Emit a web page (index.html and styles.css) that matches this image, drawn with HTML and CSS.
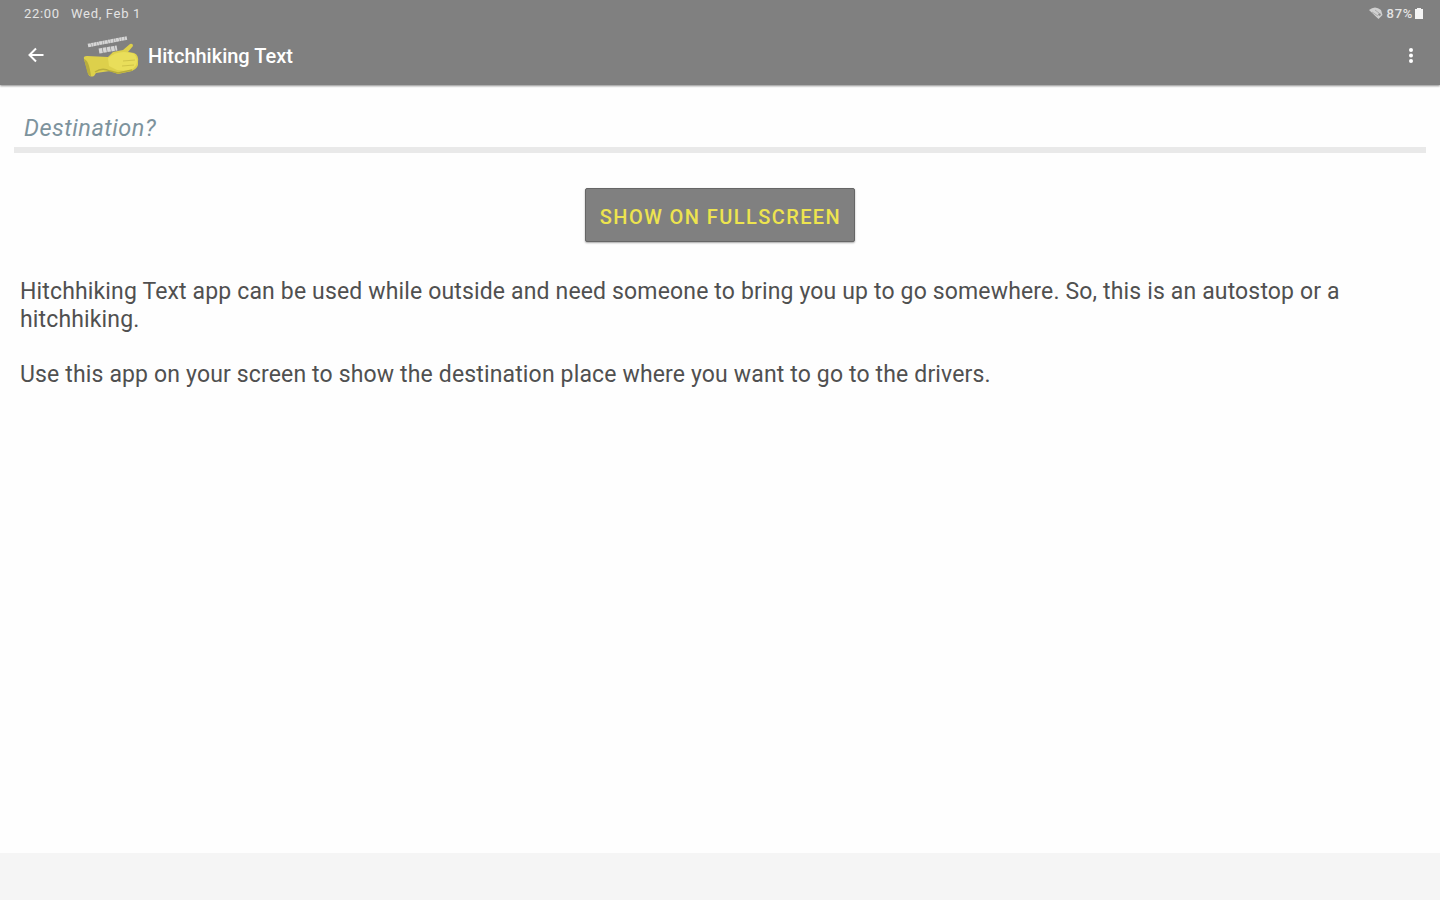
FILE: index.html
```html
<!DOCTYPE html>
<html lang="en">
<head>
    <meta charset="UTF-8">
    <meta name="viewport" content="width=device-width, initial-scale=1.0">
    <title>Hitchhiking Text</title>
    <link rel="stylesheet" href="styles.css">
</head>
<body>
    <header class="app-header">
        <div class="status-bar">
            <span class="clock">22:00</span>
            <span class="date">Wed, Feb 1</span>
            <div class="status-icons">
                <svg class="wifi-icon" width="16" height="14" viewBox="0 0 16 14">
                    <path d="M1 4Q7-1 13 4L14.500 9 10.500 13Z" fill="#d0d0d0"/>
                    <path d="M4 6l6 4M7 4l4 3" stroke="#aaa" stroke-width="1"/>
                    <circle cx="11.500" cy="8.500" r="1.200" fill="#888"/>
                </svg>
                <span class="battery-level">87%</span>
                <svg class="battery-icon" width="8" height="12" viewBox="0 0 8 12">
                    <path d="M2 1h4v1h2v10H0V2h2z" fill="#f4f4f4"/>
                </svg>
            </div>
        </div>
        <div class="toolbar">
            <svg class="back-icon" width="16" height="16" viewBox="0 0 16 16">
                <path d="M15.5 8H2M8 1.5L1.5 8 8 14.5" fill="none" stroke="#fff" stroke-width="2"/>
            </svg>
            <svg class="logo" width="58" height="44" viewBox="0 0 58 44">
                <!-- small cardboard sign -->
                <g fill="none" stroke="#d6d6d6">
                    <path d="M6 10.500L45 3" stroke-width="3.600" stroke-dasharray="3 .4 2 .3"/>
                    <path d="M17 16L35 13" stroke-width="5" stroke-dasharray="3.500 .6"/>
                </g>
                <!-- hand with the thumb up -->
                <path d="M2 24Q1 21 5 21L26 22 31 17 41 15 48 9Q51 8 51 11L46 17 52 18Q57 20 56 27 57 33 50 36L36 39 28 36 14 38 12 41Q7 43 6 38Z" fill="#ddd04b"/>
                <path d="M26 23Q33 17 42 17L50 18Q55 20 55 27 54 34 45 36L35 35 27 31Z" fill="#e9de5a"/>
                <path d="M2 24Q7 25 9 41 6 41 5 36Z" fill="#b8ad3e"/>
                <path d="M13 37Q20 32 28 36L36 38 50 35" fill="none" stroke="#b8ad3c" stroke-width="1.300"/>
                <path d="M41 26l12-1M40 31l12-1" fill="none" stroke="#d0c448"/>
            </svg>
            <h1 class="title">Hitchhiking Text</h1>
            <svg class="menu-icon" width="6" height="18" viewBox="0 0 6 18">
                <g fill="#fff">
                    <circle cx="3" cy="3" r="2"/>
                    <circle cx="3" cy="8.500" r="2"/>
                    <circle cx="3" cy="14" r="2"/>
                </g>
            </svg>
        </div>
    </header>

    <main class="content">
        <div class="destination">Destination?</div>
        <button class="fullscreen-button">SHOW ON FULLSCREEN</button>
        <div class="description">
            <p class="intro">Hitchhiking Text app can be used while outside and need someone to bring you up to go somewhere. So, this is an autostop or a hitchhiking.</p>
            <p class="usage">Use this app on your screen to show the destination place where you want to go to the drivers.</p>
        </div>
    </main>

    <footer class="nav-bar"></footer>
</body>
</html>
```

FILE: styles.css
```css
/* Basic reset and font setup */
* {
    margin: 0;
    padding: 0;
    box-sizing: border-box;
}
body {
    display: flex;
    flex-direction: column;
    height: 900px;
    font-family: Roboto, sans-serif;
    background-color: #fefefe;
    color: #505050;
}

/* Header */
.app-header {
    height: 85px;
    background-color: #808080;
    color: #fff;
    box-shadow: 0 1px 2px rgba(0, 0, 0, 0.45);
}
.status-bar {
    display: flex;
    align-items: center;
    height: 26px;
    padding: 0 17px 0 24px;
    font-size: 13px;
    color: #e4e4e4;
}
.clock {
    width: 47px;
    letter-spacing: 0.7px;
}
.date {
    font-size: 13px;
    letter-spacing: 0.7px;
}
.status-icons {
    display: flex;
    align-items: center;
    margin-left: auto;
}
.battery-level {
    margin: 0 2px 0 3px;
    font-weight: 500;
    letter-spacing: 0.7px;
}
.toolbar {
    display: flex;
    align-items: center;
    height: 59px;
    padding: 0 26px 0 28px;
}
.back-icon {
    margin-top: -1px;
}
.logo {
    margin: 3px 0 0 38px;
}
.title {
    margin-left: 8px;
    font-size: 20px;
    font-weight: 500;
}
.menu-icon {
    margin-left: auto;
}

/* Main content */
.content {
    flex: 1;
    display: flex;
    flex-direction: column;
    padding: 20px 14px 0;
}
.destination {
    height: 48px;
    padding: 8px 10px 0;
    border-bottom: 6px solid #e9e9e9;
    font-size: 23.5px;
    font-style: italic;
    letter-spacing: 0.5px;
    color: #7d939d;
    line-height: 30px;
}
.fullscreen-button {
    align-self: center;
    width: 270px;
    height: 54px;
    margin-top: 35px;
    padding: 3px 0 0 1px;
    border: 1px solid #666;
    border-radius: 2px;
    background-color: #808080;
    box-shadow: 0 1px 2px rgba(0, 0, 0, 0.35);
    font-family: inherit;
    font-size: 20px;
    font-weight: 500;
    letter-spacing: 1.42px;
    white-space: nowrap;
    color: #ede44f;
}
.description {
    margin: 36px 6px 0;
    font-size: 23px;
    line-height: 27.8px;
    letter-spacing: 0.15px;
}
.usage {
    margin-top: 27.5px;
}

/* Bottom navigation area */
.nav-bar {
    height: 47px;
    background-color: #f5f5f5;
}
```
